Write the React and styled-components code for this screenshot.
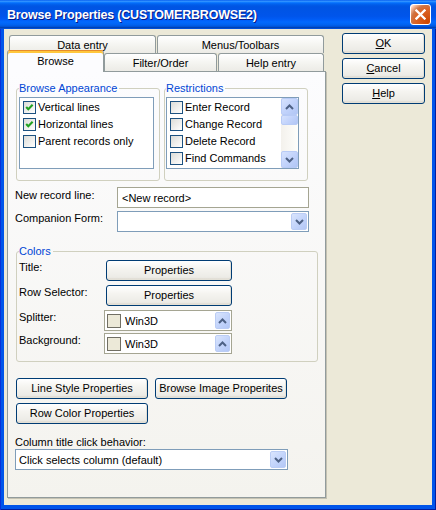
import React from 'react';
import styled, { createGlobalStyle } from 'styled-components';

const GlobalStyle = createGlobalStyle`
  html, body { margin: 0; padding: 0; background: #fff; }
  body {
    font-family: "Liberation Sans", Arial, sans-serif;
    font-size: 11px;
    color: #000;
  }
  * { box-sizing: border-box; }
`;

const Window = styled.div`
  width: 436px;
  height: 510px;
  display: flex;
  flex-direction: column;
  background: #0055ea;
`;

const TitleBar = styled.div`
  height: 29px;
  flex: none;
  display: flex;
  align-items: center;
  justify-content: space-between;
  padding: 0 5px 0 7px;
  background: linear-gradient(
    to bottom,
    #0058ee 0%, #3593ff 4%, #288eff 6%, #127dff 8%, #036ffc 10%,
    #0262ee 14%, #0057e5 20%, #0054e3 24%, #0055eb 56%, #005bf5 66%,
    #026afe 76%, #0062ef 86%, #0052d6 92%, #0040ab 94%, #0055ea 100%
  );
`;

const TitleText = styled.span`
  color: #fff;
  font-weight: bold;
  font-size: 12.5px;
  letter-spacing: -0.2px;
  text-shadow: 1px 1px 0 #0a1883;
  white-space: nowrap;
  padding-top: 1px;
`;

const CloseButton = styled.span`
  width: 21px;
  height: 21px;
  border: 1px solid #fff;
  border-radius: 3px;
  display: flex;
  align-items: center;
  justify-content: center;
  background: radial-gradient(circle at 90% 90%, #cc4600 0%, #dc6527 55%, #cd7546 70%, #ffccb2 90%, #fff 100%);
`;

const Frame = styled.div`
  flex: 1;
  display: flex;
  padding: 0 4px 5px 4px;
  box-shadow: inset 1px 0 0 #0831d9, inset -1px 0 0 #001ea0, inset 0 -1px 0 #001ea0;
`;

const Client = styled.div`
  flex: 1;
  background: #ece9d8;
  display: flex;
  align-items: flex-start;
  gap: 16px;
  padding: 4px 0 0 3px;
`;

const TabControl = styled.div`
  width: 319px;
  margin-top: 2px;
  display: flex;
  flex-direction: column;
`;

const BackRow = styled.div`
  display: flex;
  gap: 1px;
  padding-left: 2px;
  height: 18px;
`;

const FrontRow = styled.div`
  display: flex;
  align-items: flex-end;
  height: 18px;
  position: relative;
  z-index: 1;
`;

const Tab = styled.div`
  width: ${p => p.$w}px;
  height: ${p => (p.$active ? 22 : 18)}px;
  margin-bottom: ${p => (p.$active ? -1 : 0)}px;
  margin-right: ${p => p.$mr || 0}px;
  flex: none;
  display: flex;
  justify-content: center;
  align-items: ${p => (p.$active ? 'flex-start' : 'center')};
  padding-top: ${p => (p.$active ? 4 : 1)}px;
  border: 1px solid #919b9c;
  border-bottom: none;
  border-top-color: ${p => (p.$active ? '#e68b2c' : '#919b9c')};
  border-radius: 3px 3px 0 0;
  background: ${p =>
    p.$active ? '#fcfcfe' : 'linear-gradient(to bottom, #fff 0%, #f3f3ef 60%, #ecebe6 100%)'};
  box-shadow: ${p => (p.$active ? 'inset 0 2px 0 #ffc73c' : 'none')};
  white-space: nowrap;
  line-height: 13px;
  position: relative;
`;

const Panel = styled.div`
  height: 427px;
  border: 1px solid #919b9c;
  background: linear-gradient(to bottom, #fcfcfe, #f4f3ee);
  box-shadow: 1px 1px 0 #c4c1b2;
  padding: 10px 7px 0 8px;
  display: flex;
  flex-direction: column;
`;

const GroupRow = styled.div`
  display: flex;
  gap: 4px;
`;

const Group = styled.fieldset`
  margin: ${p => p.$mt || 0}px 0 0 0;
  min-width: 0;
  width: ${p => (p.$w ? `${p.$w}px` : 'auto')};
  border: 1px solid #d0d0bf;
  border-radius: 3px;
  padding: ${p => p.$pad};
`;

const Legend = styled.legend`
  padding: 0 2px 0 0;
  color: #0046d5;
  font-size: 11px;
  line-height: 13px;
`;

const ListBox = styled.div`
  height: 72px;
  border: 1px solid #7f9db9;
  background: #fff;
  display: flex;
`;

const ListItems = styled.div`
  flex: 1;
  padding: 1px 0 0 3px;
`;

const CheckRow = styled.div`
  display: flex;
  align-items: center;
  gap: 2px;
  height: 17px;
  white-space: nowrap;
  line-height: 13px;
`;

const CheckBox = styled.span`
  width: 13px;
  height: 13px;
  flex: none;
  border: 1px solid #1c5180;
  background: linear-gradient(135deg, #dcdcd7 0%, #fff 100%);
  display: flex;
  align-items: center;
  justify-content: center;
`;

const ScrollBar = styled.div`
  width: 17px;
  flex: none;
  display: flex;
  flex-direction: column;
  background: linear-gradient(to right, #f3f1ec, #fefefb);
`;

const ScrollButton = styled.span`
  height: ${p => p.$h || 17}px;
  flex: none;
  border: 1px solid #b8cbf6;
  border-radius: 2px;
  background: linear-gradient(135deg, #d6e2fd 0%, #c2d3fb 50%, #b1c6f5 100%);
  display: flex;
  align-items: center;
  justify-content: center;
`;

const ScrollTrack = styled.div`
  flex: 1;
`;

const FormGrid = styled.div`
  display: grid;
  grid-template-columns: 102px 192px;
  row-gap: 3px;
  margin: 6px 0 0 -1px;
`;

const FieldLabel = styled.span`
  padding-top: ${p => p.$pt || 0}px;
  line-height: 13px;
  white-space: nowrap;
`;

const TextBox = styled.div`
  height: 21px;
  border: 1px solid #a5a592;
  background: #fff;
  display: flex;
  align-items: center;
  padding-left: 4px;
  white-space: nowrap;
`;

const Combo = styled.div`
  height: 21px;
  width: ${p => (p.$w ? `${p.$w}px` : 'auto')};
  margin-left: ${p => p.$ml || 0}px;
  border: 1px solid ${p => p.$border || '#7f9db9'};
  background: #fff;
  display: flex;
  align-items: stretch;
  padding: 1px;
`;

const ComboText = styled.span`
  flex: 1;
  display: flex;
  align-items: center;
  gap: 4px;
  padding-left: ${p => p.$pl || 2}px;
  white-space: nowrap;
`;

const Swatch = styled.span`
  width: 14px;
  height: 14px;
  flex: none;
  border: 1px solid #716f64;
  background: #ece9d8;
`;

const DropButton = styled.span`
  width: ${p => p.$w || 16}px;
  flex: none;
  border: 1px solid #bbcdf5;
  border-radius: 2px;
  background: linear-gradient(135deg, #dae5fd 0%, #c4d5fb 50%, #b3c7f6 100%);
  display: flex;
  align-items: center;
  justify-content: center;
`;

const ColorsGrid = styled.div`
  display: grid;
  grid-template-columns: 85px 128px;
  grid-template-rows: 25px 25px 23px 21px;
  align-items: start;
`;

const Button = styled.button`
  font: inherit;
  font-size: 11px;
  color: #000;
  height: 21px;
  width: ${p => (p.$w ? `${p.$w}px` : 'auto')};
  margin-left: ${p => p.$ml || 0}px;
  padding: 0;
  border: 1px solid #003c74;
  border-radius: 3px;
  background: linear-gradient(180deg, #fff 0%, #f5f4f0 40%, #ecebe6 86%, #d6d0c5 100%);
  box-shadow: inset -1px -1px 0 #e3e0d6;
  white-space: nowrap;
  line-height: 13px;
`;

const ButtonGrid = styled.div`
  display: grid;
  grid-template-columns: 132px 132px;
  column-gap: 7px;
  row-gap: 4px;
  margin-top: 16px;
`;

const BehaviorLabel = styled.div`
  margin: 12px 0 0 -1px;
  line-height: 13px;
`;

const SideButtons = styled.div`
  display: flex;
  flex-direction: column;
  gap: 4px;
`;

const CheckMark = () => (
  <svg width="11" height="11" viewBox="0 0 11 11">
    <polyline points="2.2,5 4.3,7.2 8.6,2.8" fill="none" stroke="#21a121" strokeWidth="2.1" />
  </svg>
);

const ChevronDown = () => (
  <svg width="9" height="6" viewBox="0 0 9 6">
    <polyline points="1,1 4.5,4.5 8,1" fill="none" stroke="#4d6185" strokeWidth="2" />
  </svg>
);

const ChevronUp = () => (
  <svg width="9" height="6" viewBox="0 0 9 6">
    <polyline points="1,5 4.5,1.5 8,5" fill="none" stroke="#4d6185" strokeWidth="2" />
  </svg>
);

const CloseGlyph = () => (
  <svg width="11" height="11" viewBox="0 0 11 11">
    <path d="M1.5 1.5 L9.5 9.5 M9.5 1.5 L1.5 9.5" stroke="#fff" strokeWidth="2.3" strokeLinecap="square" />
  </svg>
);

const Item = ({ label, checked }) => (
  <CheckRow>
    <CheckBox>{checked && <CheckMark />}</CheckBox>
    {label}
  </CheckRow>
);

const ColorCombo = () => (
  <Combo $w={128} $border="#a5a592">
    <ComboText $pl={1}>
      <Swatch />
      Win3D
    </ComboText>
    <DropButton $w={15}>
      <ChevronUp />
    </DropButton>
  </Combo>
);

const appearance = [
  { label: 'Vertical lines', checked: true },
  { label: 'Horizontal lines', checked: true },
  { label: 'Parent records only', checked: false },
];

const restrictions = ['Enter Record', 'Change Record', 'Delete Record', 'Find Commands'];

export default function App() {
  return (
    <>
      <GlobalStyle />
      <Window>
        <TitleBar>
          <TitleText>Browse Properties (CUSTOMERBROWSE2)</TitleText>
          <CloseButton>
            <CloseGlyph />
          </CloseButton>
        </TitleBar>
        <Frame>
          <Client>
            <TabControl>
              <BackRow>
                <Tab $w={147}>Data entry</Tab>
                <Tab $w={167}>Menus/Toolbars</Tab>
              </BackRow>
              <FrontRow>
                <Tab $w={97} $active>Browse</Tab>
                <Tab $w={113} $mr={1}>Filter/Order</Tab>
                <Tab $w={106}>Help entry</Tab>
              </FrontRow>
              <Panel>
                <GroupRow>
                  <Group $w={144} $pad="2px 5px 11px 2px">
                    <Legend>Browse Appearance</Legend>
                    <ListBox>
                      <ListItems>
                        {appearance.map(a => (
                          <Item key={a.label} label={a.label} checked={a.checked} />
                        ))}
                      </ListItems>
                    </ListBox>
                  </Group>
                  <Group $w={144} $pad="2px 8px 11px 1px">
                    <Legend>Restrictions</Legend>
                    <ListBox>
                      <ListItems>
                        {restrictions.map(r => (
                          <Item key={r} label={r} />
                        ))}
                      </ListItems>
                      <ScrollBar>
                        <ScrollButton>
                          <ChevronUp />
                        </ScrollButton>
                        <ScrollButton $h={10} />
                        <ScrollTrack />
                        <ScrollButton>
                          <ChevronDown />
                        </ScrollButton>
                      </ScrollBar>
                    </ListBox>
                  </Group>
                </GroupRow>

                <FormGrid>
                  <FieldLabel $pt={2}>New record line:</FieldLabel>
                  <TextBox>&lt;New record&gt;</TextBox>
                  <FieldLabel $pt={1}>Companion Form:</FieldLabel>
                  <Combo>
                    <ComboText />
                    <DropButton>
                      <ChevronDown />
                    </DropButton>
                  </Combo>
                </FormGrid>

                <Group $mt={13} $pad="2px 2px 7px 2px">
                  <Legend>Colors</Legend>
                  <ColorsGrid>
                    <FieldLabel $pt={1}>Title:</FieldLabel>
                    <Button $w={126} $ml={2}>Properties</Button>
                    <FieldLabel $pt={1}>Row Selector:</FieldLabel>
                    <Button $w={126} $ml={2}>Properties</Button>
                    <FieldLabel $pt={1}>Splitter:</FieldLabel>
                    <ColorCombo />
                    <FieldLabel $pt={1}>Background:</FieldLabel>
                    <ColorCombo />
                  </ColorsGrid>
                </Group>

                <ButtonGrid>
                  <Button>Line Style Properties</Button>
                  <Button>Browse Image Properites</Button>
                  <Button>Row Color Properties</Button>
                </ButtonGrid>

                <BehaviorLabel>Column title click behavior:</BehaviorLabel>
                <Combo $w={273} $ml={-1}>
                  <ComboText>Click selects column (default)</ComboText>
                  <DropButton>
                    <ChevronDown />
                  </DropButton>
                </Combo>
              </Panel>
            </TabControl>

            <SideButtons>
              <Button $w={83}>
                <u>O</u>K
              </Button>
              <Button $w={83}>
                <u>C</u>ancel
              </Button>
              <Button $w={83}>
                <u>H</u>elp
              </Button>
            </SideButtons>
          </Client>
        </Frame>
      </Window>
    </>
  );
}
